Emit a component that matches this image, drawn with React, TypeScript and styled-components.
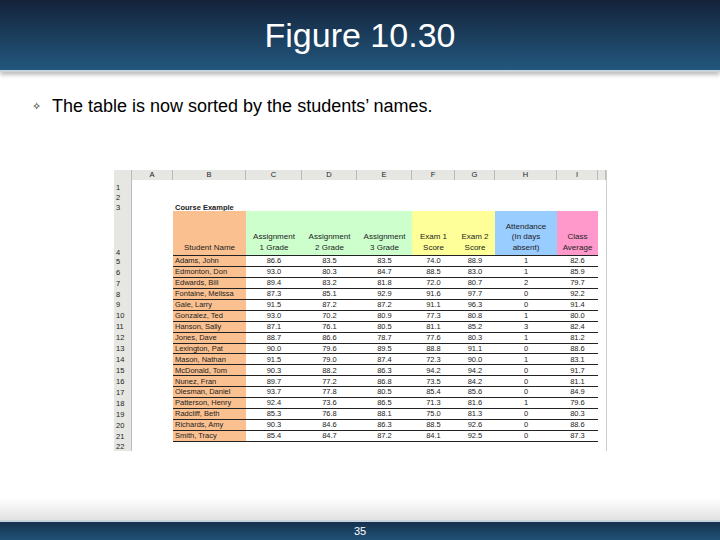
import React from "react";
import styled, { createGlobalStyle } from "styled-components";

const G = createGlobalStyle`
  html,body{margin:0;padding:0;background:#fff;}
  body{width:720px;height:540px;overflow:hidden;font-family:"Liberation Sans",Arial,sans-serif;}
`;
const Page = styled.div`width:720px;height:540px;display:flex;flex-direction:column;`;
const Header = styled.div`
  height:70px;flex:none;display:flex;align-items:center;justify-content:center;
  background:linear-gradient(#14233a,#22577e);color:#fff;font-size:34px;
  border-bottom:2px solid #c9d3dc;box-shadow:0 3px 4px rgba(0,0,0,0.25);
`;
const Body = styled.div`flex:1;display:flex;flex-direction:column;padding:24px 0 0 30px;`;
const Bullet = styled.div`display:flex;align-items:center;gap:10px;font-size:18px;color:#000;`;
const Mark = styled.span`font-size:11px;width:12px;text-align:center;`;
const Sheet = styled.div`
  margin:53px 0 0 84px;width:492px;display:grid;
  grid-template-columns:18px 41px 73px 56px 55px 55px 43px 40px 62px 41px 8px;
  grid-template-rows:10px 11px 10px 10px 45px repeat(17,10.95px) 9px;
  font-size:7.5px;line-height:1;
  border-right:1px solid #ccc;
`;
const Cell = styled.div<{ $bg?: string; $align?: string; $v?: string; $b?: boolean; $gray?: boolean }>`
  background:${p => p.$bg || (p.$gray ? "#e6e6e2" : "#fff")};
  display:flex;justify-content:${p => p.$align || "center"};align-items:${p => p.$v || "center"};
  border-bottom:${p => (p.$b ? "1px solid #222" : "none")};
  border-right:${p => (p.$gray ? "1px solid #bbb" : "none")};
  color:#222;white-space:nowrap;overflow:hidden;text-align:center;
  padding:${p => (p.$align === "flex-start" ? "0 0 0 2px" : "0")};
  box-sizing:border-box;
`;
const HeadText = styled.div`font-size:8px;line-height:1.35;padding-bottom:1px;`;
const Footer = styled.div`
  height:18px;flex:none;border-top:2px solid #c9d3dc;
  background:linear-gradient(#16304d,#1f5276);color:#fff;font-size:11px;
  display:flex;align-items:center;justify-content:center;
`;
const Fade = styled.div`height:22px;background:linear-gradient(#fff,#e2e2e2);`;

const names = ["Adams, John","Edmonton, Don","Edwards, Bill","Fontaine, Melissa","Gale, Larry","Gonzalez, Ted","Hanson, Sally","Jones, Dave","Lexington, Pat","Mason, Nathan","McDonald, Tom","Nunez, Fran","Olesman, Daniel","Patterson, Henry","Radcliff, Beth","Richards, Amy","Smith, Tracy"];
const data = [
"86.6 83.5 83.5 74.0 88.9 1 82.6","93.0 80.3 84.7 88.5 83.0 1 85.9","89.4 83.2 81.8 72.0 80.7 2 79.7","87.3 85.1 92.9 91.6 97.7 0 92.2","91.5 87.2 87.2 91.1 96.3 0 91.4","93.0 70.2 80.9 77.3 80.8 1 80.0","87.1 76.1 80.5 81.1 85.2 3 82.4","88.7 86.6 78.7 77.6 80.3 1 81.2","90.0 79.6 89.5 88.8 91.1 0 88.6","91.5 79.0 87.4 72.3 90.0 1 83.1","90.3 88.2 86.3 94.2 94.2 0 91.7","89.7 77.2 86.8 73.5 84.2 0 81.1","93.7 77.8 80.5 85.4 85.6 0 84.9","92.4 73.6 86.5 71.3 81.6 1 79.6","85.3 76.8 88.1 75.0 81.3 0 80.3","90.3 84.6 86.3 88.5 92.6 0 88.6","85.4 84.7 87.2 84.1 92.5 0 87.3"];
const cols = ["", "A","B","C","D","E","F","G","H","I",""];
const hdr: [string[],string][] = [
  [["Assignment","1 Grade"],"#ccffcc"],[["Assignment","2 Grade"],"#ccffcc"],[["Assignment","3 Grade"],"#ccffcc"],
  [["Exam 1","Score"],"#ffff99"],[["Exam 2","Score"],"#ffff99"],
  [["Attendance","(In days","absent)"],"#99ccff"],[["Class","Average"],"#ff99cc"]];

export default function App() {
  const cells: React.ReactNode[] = [];
  cols.forEach((c, i) => cells.push(<Cell key={"h"+i} $gray>{c}</Cell>));
  const empty = (r: number, label: string, b?: React.ReactNode) => {
    cells.push(<Cell key={r+"n"} $gray $align="flex-start" $v="flex-end">{label}</Cell>);
    cells.push(<Cell key={r+"a"} />);
    cells.push(<Cell key={r+"b"} $align="flex-start" $v="flex-end">{b}</Cell>);
    for (let k = 0; k < 8; k++) cells.push(<Cell key={r+"x"+k} />);
  };
  empty(1, "1"); empty(2, "2"); empty(3, "3", <b>Course Example</b>);
  cells.push(<Cell key="4n" $gray $align="flex-start" $v="flex-end">4</Cell>);
  cells.push(<Cell key="4a" />);
  cells.push(<Cell key="4b" $bg="#fac090" $v="flex-end" $b><HeadText>Student Name</HeadText></Cell>);
  hdr.forEach(([t, bg], i) => cells.push(
    <Cell key={"4h"+i} $bg={bg} $v="flex-end" $b>
      <HeadText>{t.map((s, j) => <div key={j}>{s}</div>)}</HeadText>
    </Cell>));
  cells.push(<Cell key="4z" />);
  names.forEach((n, i) => {
    const r = i + 5;
    cells.push(<Cell key={r+"n"} $gray $align="flex-start">{r}</Cell>);
    cells.push(<Cell key={r+"a"} />);
    cells.push(<Cell key={r+"b"} $bg="#fac090" $align="flex-start" $b>{n}</Cell>);
    data[i].split(" ").forEach((v, k) => cells.push(<Cell key={r+"d"+k} $b>{v}</Cell>));
    cells.push(<Cell key={r+"z"} />);
  });
  empty(22, "22");
  return (
    <Page>
      <G />
      <Header>Figure 10.30</Header>
      <Body>
        <Bullet><Mark>✧</Mark>The table is now sorted by the students’ names.</Bullet>
        <Sheet>{cells}</Sheet>
      </Body>
      <Fade />
      <Footer>35</Footer>
    </Page>
  );
}
